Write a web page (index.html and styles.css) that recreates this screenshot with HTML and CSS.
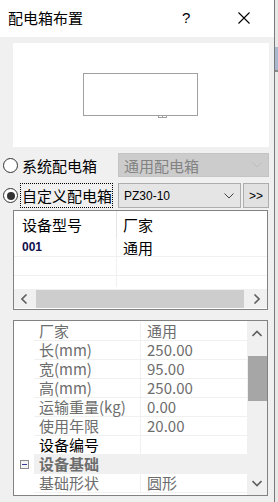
FILE: index.html
```html
<!DOCTYPE html>
<html>
<head>
<meta charset="utf-8">
<link rel="stylesheet" href="styles.css">
</head>
<body>
<div class="screen">
  <div class="dialog">
    <div class="titlebar">
      <span class="title">配电箱布置</span>
      <span class="help">?</span>
      <svg class="close" width="12" height="12" viewBox="0 0 12 12"><path d="M0.5 0.5 L11.5 11.5 M11.5 0.5 L0.5 11.5" stroke="#000" stroke-width="1.1" fill="none"/></svg>
    </div>
    <div class="body">
      <div class="preview">
        <svg width="256" height="104" viewBox="0 0 256 104">
          <rect x="70.5" y="30.5" width="114" height="42" fill="none" stroke="#a0a0a0" stroke-width="1"/>
          <rect x="145.5" y="72.5" width="8" height="2" fill="none" stroke="#a0a0a0" stroke-width="1"/>
          <line x1="149.5" y1="72.5" x2="149.5" y2="74.5" stroke="#a0a0a0"/>
        </svg>
      </div>
      <div class="optrow">
        <div class="radio-label">
          <span class="radio"></span>
          <span class="rtext">系统配电箱</span>
        </div>
        <div class="combo disabled">
          <span class="ctext">通用配电箱</span>
          <svg class="arrow" width="10" height="6" viewBox="0 0 10 6"><path d="M0.5 0.5 L5 5 L9.5 0.5" stroke="#bdbdbd" fill="none"/></svg>
        </div>
      </div>
      <div class="optrow row2">
        <div class="radio-label">
          <span class="radio checked"><span class="dot"></span></span>
          <span class="rtext focus">自定义配电箱</span>
        </div>
        <div class="combo active">
          <span class="ctext latin">PZ30-10</span>
          <svg class="arrow" width="10" height="6" viewBox="0 0 10 6"><path d="M0.5 0.5 L5 5 L9.5 0.5" stroke="#444" fill="none"/></svg>
        </div>
        <div class="morebtn">&gt;&gt;</div>
      </div>
      <div class="listgrid">
        <div class="lrow lhead">
          <div class="lc c1">设备型号</div>
          <div class="lc c2">厂家</div>
        </div>
        <div class="lrow">
          <div class="lc c1 latin code">001</div>
          <div class="lc c2">通用</div>
        </div>
        <div class="lrow">
          <div class="lc c1"></div>
          <div class="lc c2"></div>
        </div>
        <div class="lrow last">
          <div class="lc c1"></div>
          <div class="lc c2"></div>
        </div>
        <div class="hscroll">
          <svg class="harrow" width="7" height="10" viewBox="0 0 7 10"><path d="M5.5 0.5 L1 5 L5.5 9.5" stroke="#606060" stroke-width="1.6" fill="none"/></svg>
          <div class="hthumb"></div>
          <svg class="harrow" width="7" height="10" viewBox="0 0 7 10"><path d="M1.5 0.5 L6 5 L1.5 9.5" stroke="#606060" stroke-width="1.6" fill="none"/></svg>
        </div>
      </div>
      <div class="propgrid">
        <div class="props">
          <div class="prow"><div class="gut"></div><div class="pn">厂家</div><div class="pv">通用</div></div>
          <div class="prow"><div class="gut"></div><div class="pn">长(mm)</div><div class="pv">250.00</div></div>
          <div class="prow"><div class="gut"></div><div class="pn">宽(mm)</div><div class="pv">95.00</div></div>
          <div class="prow"><div class="gut"></div><div class="pn">高(mm)</div><div class="pv">250.00</div></div>
          <div class="prow"><div class="gut"></div><div class="pn">运输重量(kg)</div><div class="pv">0.00</div></div>
          <div class="prow"><div class="gut"></div><div class="pn">使用年限</div><div class="pv">20.00</div></div>
          <div class="prow"><div class="gut"></div><div class="pn dark">设备编号</div><div class="pv"></div></div>
          <div class="prow cat"><div class="gut"><span class="minus"></span></div><div class="catname">设备基础</div></div>
          <div class="prow"><div class="gut"></div><div class="pn">基础形状</div><div class="pv">圆形</div></div>
        </div>
        <div class="vscroll">
          <svg class="varrow" width="10" height="7" viewBox="0 0 10 7"><path d="M0.5 6 L5 1.5 L9.5 6" stroke="#606060" stroke-width="1.6" fill="none"/></svg>
          <div class="vthumb"></div>
          <div class="vspace"></div>
          <svg class="varrow" width="10" height="7" viewBox="0 0 10 7"><path d="M0.5 1 L5 5.5 L9.5 1" stroke="#606060" stroke-width="1.6" fill="none"/></svg>
        </div>
      </div>
    </div>
  </div>
  <div class="edge">
    <div class="edge-blue"></div>
  </div>
</div>
</body>
</html>
```

FILE: styles.css
```css
* { box-sizing: border-box; }
html, body {
  margin: 0;
  padding: 0;
  width: 278px;
  height: 502px;
  overflow: hidden;
  font-family: "Noto Sans CJK SC", "Noto Sans", sans-serif;
}
.screen {
  display: flex;
  width: 278px;
  height: 502px;
}
.dialog {
  width: 274px;
  height: 502px;
  background: #f0f0f0;
  display: flex;
  flex-direction: column;
}
.edge {
  width: 4px;
  height: 502px;
  border-left: 1px solid #7a7a7a;
  background: #e8e8e8;
  padding-top: 47px;
}
.edge-blue {
  height: 25px;
  background: #a9b8cc;
  border-bottom: 2px solid #8a8a8a;
}
.titlebar {
  height: 37px;
  background: #ffffff;
  display: flex;
  align-items: center;
  flex-shrink: 0;
}
.title {
  font-size: 15px;
  color: #000;
  padding-left: 8px;
  width: 182px;
  line-height: 1;
  margin-top: -2px;
}
.help {
  font-family: "Liberation Sans", sans-serif;
  font-size: 15px;
  color: #000;
  width: 56px;
  margin-top: -2px;
}
.close {
  margin-top: -2px;
}
.body {
  padding: 6px 5px 0 13px;
  display: flex;
  flex-direction: column;
}
.preview {
  width: 256px;
  height: 104px;
  background: #ffffff;
}
.preview svg { display: block; }
.optrow {
  display: flex;
  align-items: center;
  margin-top: 6px;
  margin-left: -10px;
  height: 24px;
}
.optrow.row2 { height: 25px; }
.radio-label {
  width: 115px;
  display: flex;
  align-items: center;
  height: 100%;
}
.radio {
  width: 15px;
  height: 15px;
  border: 1px solid #333;
  border-radius: 50%;
  background: #fff;
  display: flex;
  align-items: center;
  justify-content: center;
  flex-shrink: 0;
}
.radio .dot {
  width: 8px;
  height: 8px;
  border-radius: 50%;
  background: #333;
}
.rtext {
  font-size: 15px;
  line-height: 1;
  margin-left: 4px;
  color: #000;
  white-space: nowrap;
}
.rtext.focus {
  outline: 1px dotted #000;
  outline-offset: 0;
  padding: 4px 0 4px 0;
  margin-left: 3px;
  padding-left: 1px;
}
.combo {
  height: 100%;
  display: flex;
  align-items: center;
  justify-content: space-between;
  padding: 0 6px 0 5px;
}
.combo.disabled {
  width: 151px;
  background: #cccccc;
  border: 1px solid #c4c4c4;
}
.combo.disabled .ctext {
  font-size: 15px;
  color: #838383;
}
.combo.active {
  width: 123px;
  background: #e5e5e5;
  border: 1px solid #adadad;
}
.ctext { line-height: 1; }
.latin {
  font-family: "Liberation Sans", sans-serif;
  font-size: 12px;
  color: #000;
}
.morebtn {
  width: 26px;
  height: 25px;
  margin-left: 2px;
  background: #e1e1e1;
  border: 1px solid #adadad;
  font-family: "Liberation Sans", sans-serif;
  font-size: 12px;
  display: flex;
  align-items: center;
  justify-content: center;
  letter-spacing: 0px;
}
.listgrid {
  margin-top: 2px;
  width: 255px;
  height: 100px;
  border: 1px solid #828282;
  background: #fff;
  display: flex;
  flex-direction: column;
}
.lrow {
  display: flex;
  height: 19px;
  border-bottom: 1px solid #f0f0f0;
}
.lrow.lhead {
  height: 27px;
  border-bottom: none;
  align-items: center;
}
.lrow.last { height: 11px; border-bottom: none; }
.lc {
  font-size: 15px;
  line-height: 1;
  display: flex;
  align-items: center;
}
.c1 {
  width: 103px;
  padding-left: 8px;
  border-right: 1px solid #f0f0f0;
  height: 100%;
}
.lhead .c1 { border-right: 1px solid #e4e4e4; height: 27px; }
.c2 { padding-left: 6px; }
.code { font-weight: bold; color: #10104a; font-size: 12px; }
.hscroll {
  margin-top: auto;
  height: 19px;
  background: #f0f0f0;
  display: flex;
  align-items: center;
  margin-bottom: 1px;
}
.harrow { flex-shrink: 0; margin: 0 7px 0 7px; }
.hthumb {
  flex: 1;
  height: 18px;
  background: #cdcdcd;
  margin: 0 2px 0 1px;
}
.propgrid {
  margin-top: 10px;
  width: 255px;
  height: 176px;
  border: 1px solid #828282;
  background: #fff;
  display: flex;
}
.props {
  flex: 1;
  display: flex;
  flex-direction: column;
  padding-top: 1px;
}
.prow {
  display: flex;
  height: 19px;
  border-bottom: 1px solid #f0f0f0;
  align-items: stretch;
}
.gut {
  width: 20px;
  background: #fff;
  display: flex;
  align-items: center;
  justify-content: center;
  border-bottom: 1px solid #fff;
  margin-bottom: -1px;
}
.pn {
  width: 107px;
  padding-left: 5px;
  font-size: 15px;
  line-height: 18px;
  color: #6d6d6d;
  border-right: 1px solid #f0f0f0;
  white-space: nowrap;
}
.pn.dark { color: #000; }
.pv {
  flex: 1;
  padding-left: 6px;
  font-size: 15px;
  line-height: 18px;
  color: #6d6d6d;
}
.prow.cat { background: #f0f0f0; }
.catname {
  padding-left: 5px;
  font-size: 15px;
  line-height: 18px;
  font-weight: bold;
  color: #6d6d6d;
}
.minus {
  width: 9px;
  height: 9px;
  border: 1px solid #8a8a8a;
  background: #f4f4f4;
  position: relative;
  display: block;
}
.minus::after {
  content: "";
  position: absolute;
  left: 1px;
  top: 3px;
  width: 5px;
  height: 1px;
  background: #3a3a9a;
}
.vscroll {
  width: 20px;
  background: #f0f0f0;
  display: flex;
  flex-direction: column;
  align-items: center;
  margin-right: 0;
}
.varrow { flex-shrink: 0; margin-top: 9px; }
.vthumb {
  width: 19px;
  height: 45px;
  background: #a6a6a6;
  margin-top: 19px;
}
.vspace { flex: 1; }
.vscroll .varrow:last-child { margin-top: 0; margin-bottom: 8px; }
```
